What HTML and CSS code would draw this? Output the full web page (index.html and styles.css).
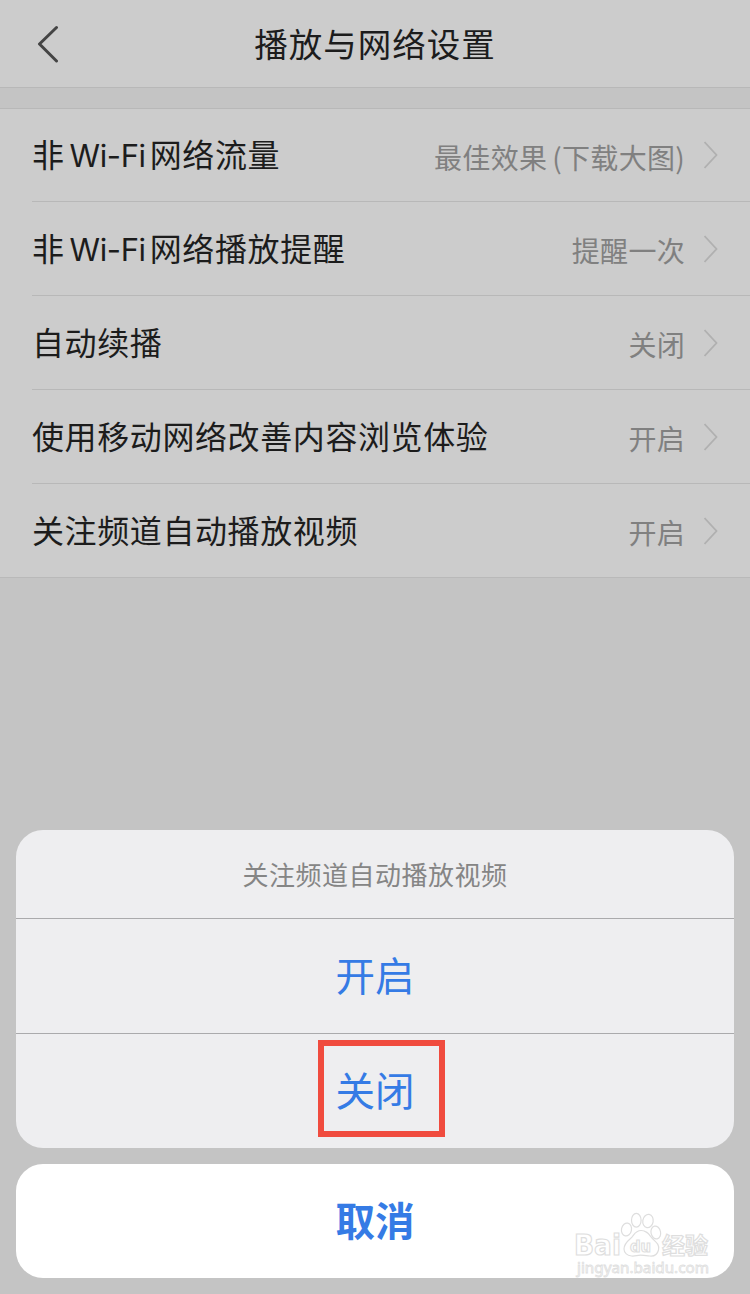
FILE: index.html
```html
<!DOCTYPE html>
<html lang="zh-CN">
<head>
<meta charset="utf-8">
<title>播放与网络设置</title>
<link rel="stylesheet" href="styles.css">
</head>
<body>
<div class="screen">
  <header class="navbar">
    <svg class="back" width="22" height="38" viewBox="0 0 22 38"><path d="M19.5 2.5 2.5 19l17 17"/></svg>
    <h1 class="title">播放与网络设置</h1>
  </header>
  <main class="list">
    <div class="row"><span class="label">非<span class="latin">Wi-Fi</span>网络流量</span><span class="value">最佳效果<span class="paren">(</span>下载大图<span>)</span></span><svg class="chevron" width="14" height="28" viewBox="0 0 14 28"><path d="m.5 1 12 13-12 13"/></svg></div>
    <div class="row"><span class="label">非<span class="latin">Wi-Fi</span>网络播放提醒</span><span class="value">提醒一次</span><svg class="chevron" width="14" height="28" viewBox="0 0 14 28"><path d="m.5 1 12 13-12 13"/></svg></div>
    <div class="row"><span class="label">自动续播</span><span class="value">关闭</span><svg class="chevron" width="14" height="28" viewBox="0 0 14 28"><path d="m.5 1 12 13-12 13"/></svg></div>
    <div class="row"><span class="label">使用移动网络改善内容浏览体验</span><span class="value">开启</span><svg class="chevron" width="14" height="28" viewBox="0 0 14 28"><path d="m.5 1 12 13-12 13"/></svg></div>
    <div class="row"><span class="label">关注频道自动播放视频</span><span class="value">开启</span><svg class="chevron" width="14" height="28" viewBox="0 0 14 28"><path d="m.5 1 12 13-12 13"/></svg></div>
  </main>
  <div class="actions">
    <div class="sheet">
      <div class="sheet-title">关注频道自动播放视频</div>
      <div class="option">开启</div>
      <div class="option">关闭<span class="highlight"></span></div>
    </div>
    <div class="cancel">取消
      <svg class="watermark" width="140" height="76" viewBox="0 0 140 76">
        <text class="brand" x="-1" y="51.500" font-size="29" textLength="47" lengthAdjust="spacingAndGlyphs">Bai</text>
        <ellipse cx="51.500" cy="26.500" rx="5" ry="6.500" transform="rotate(12 51.500 26.500)"/>
        <ellipse cx="61.300" cy="17.200" rx="4.800" ry="6.900"/>
        <ellipse cx="73" cy="18" rx="5.200" ry="6.700" transform="rotate(10 73 18)"/>
        <ellipse cx="80.800" cy="29.500" rx="4.800" ry="6.500" transform="rotate(-12 80.800 29.500)"/>
        <path d="M66 27.500c6 0 8 4 11 7.500s8 6 6.500 12-5 6.500-9 6-6-.8-9-.8-6 1.300-9 .8c-4-.5-7.500-3-7.500-7s3-7.500 6.500-10.500 4.500-8 10.500-8z"/>
        <text class="brand" x="55" y="49" font-size="16" textLength="21" lengthAdjust="spacingAndGlyphs">du</text>
        <text class="brand" x="87" y="50.500" font-size="23" textLength="46" lengthAdjust="spacingAndGlyphs">经验</text>
        <text class="site" x="2" y="69.500" font-size="14.500" textLength="132" lengthAdjust="spacingAndGlyphs">jingyan.baidu.com</text>
      </svg>
    </div>
  </div>
</div>
</body>
</html>
```

FILE: styles.css
```css
* { box-sizing: border-box; }
body {
  margin: 0;
  font-family: "Noto Sans CJK SC", sans-serif;
  background: #c4c4c4;
}
.screen {
  width: 750px;
  height: 1294px;
  display: flex;
  flex-direction: column;
  overflow: hidden;
}
.navbar {
  height: 88px;
  flex: none;
  display: grid;
  grid-template-columns: 80px 1fr 80px;
  align-items: center;
  background: #ccc;
  border-bottom: 1px solid #b8b8b8;
}
.back { margin-left: 37px; fill: none; stroke: #444; stroke-width: 3; stroke-linecap: round; stroke-linejoin: round; }
.title {
  margin: 0;
  padding-bottom: 2px;
  font-size: 33.500px;
  line-height: 48px;
  font-weight: 400;
  letter-spacing: 1px;
  text-align: center;
  color: #1c1c1c;
}
.list {
  flex: none;
  margin-top: 20px;
  background: #ccc;
  border-top: 1px solid #b8b8b8;
  border-bottom: 1px solid #b9b9b9;
}
.row {
  height: 94px;
  margin-left: 32px;
  padding-right: 32px;
  display: flex;
  align-items: center;
  white-space: nowrap;
  line-height: 48px;
  border-bottom: 1px solid #b8b8b8;
}
.row:first-child { height: 93px; }
.row:last-child { height: 93px; border-bottom: 0; }
.label { flex: 1; height: 48px; margin-top: -4px; font-size: 32px; letter-spacing: .6px; color: #1c1c1c; }
.latin { font-family: Inter, sans-serif; font-size: 31px; line-height: 1; margin: 0 4px 0 5px; letter-spacing: -.4px; }
.value { font-size: 28px; letter-spacing: .3px; color: #808080; padding-top: 3px; margin-right: 19px; }
.paren { margin-left: 5px; }
.chevron { fill: none; stroke: #b0b0b0; stroke-width: 1.800; }
.actions {
  margin-top: auto;
  padding: 0 16px 16px;
  display: flex;
  flex-direction: column;
  gap: 16px;
  text-align: center;
}
.sheet {
  height: 318px;
  display: flex;
  flex-direction: column;
  background: #eeeef0;
  border-radius: 27px;
}
.sheet-title {
  height: 88px;
  line-height: 88px;
  font-size: 26px;
  letter-spacing: .5px;
  color: #858585;
}
.option {
  position: relative;
  height: 115px;
  border-top: 1px solid #aaaaac;
  line-height: 110px;
  font-size: 39.500px;
  color: #357be5;
}
.highlight {
  position: absolute;
  left: 302px;
  top: 6px;
  width: 127px;
  height: 97px;
  border: 6px solid #f04b3e;
}
.cancel {
  position: relative;
  height: 114px;
  line-height: 110px;
  background: #fff;
  border-radius: 27px;
  font-size: 39.500px;
  font-weight: 700;
  color: #357be5;
}
.watermark {
  position: absolute;
  left: 559px;
  top: 39px;
  line-height: 1;
  fill: #fff;
  stroke: #dedede;
  stroke-width: 1.200;
  overflow: visible;
}
.brand { font-family: "DejaVu Sans", "Noto Sans CJK SC", sans-serif; font-weight: 700; }
.site { font-family: "Noto Sans", sans-serif; font-weight: 400; stroke-width: .8; }
```
